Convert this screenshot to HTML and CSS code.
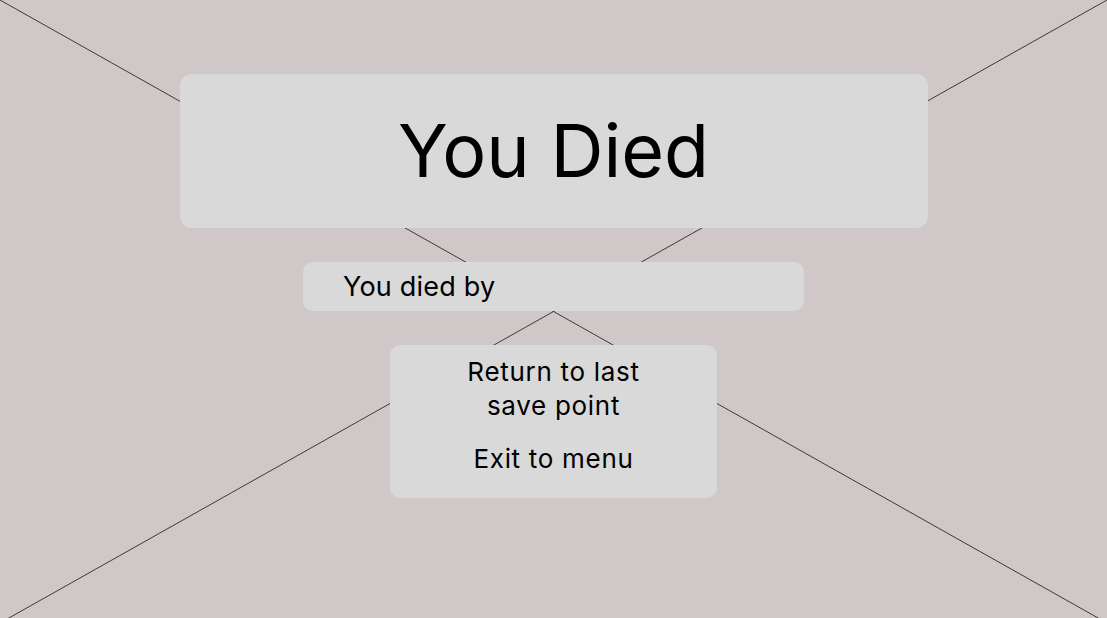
FILE: index.html
```html
<!DOCTYPE html>
<html lang="en">
<head>
<meta charset="utf-8">
<title>You Died</title>
<link rel="stylesheet" href="styles.css">
</head>
<body>
<svg class="backdrop" width="1107" height="623" viewBox="0 0 1107 623" aria-hidden="true">
  <line x1="0" y1="0" x2="1107" y2="623" />
  <line x1="1107" y1="0" x2="0" y2="623" />
</svg>
<main class="screen">
  <section class="panel title-panel">
    <h1 class="title">You Died</h1>
  </section>
  <section class="panel cause-panel">
    <p class="cause">You died by</p>
  </section>
  <nav class="panel menu-panel">
    <div class="menu-item">Return to last<br>save point</div>
    <div class="menu-item">Exit to menu</div>
  </nav>
</main>
</body>
</html>
```
FILE: styles.css
```css
html, body {
  margin: 0;
  padding: 0;
  width: 1107px;
  height: 618px;
  overflow: hidden;
  background: #d0c8c8;
  font-family: Inter, "Noto Sans", "Liberation Sans", sans-serif;
  color: #000;
}

.backdrop {
  position: absolute;
  left: 0;
  top: 0;
  z-index: 0;
}

.backdrop line {
  stroke: #3a3a3a;
  stroke-width: 1;
}

.screen {
  position: relative;
  z-index: 1;
  display: flex;
  flex-direction: column;
  align-items: center;
  gap: 34px;
  padding-top: 74px;
}

.panel {
  background: #d9d9d9;
  box-sizing: border-box;
}

.title-panel {
  width: 748px;
  height: 154px;
  border-radius: 12px;
  display: flex;
  align-items: center;
  justify-content: center;
}

.title {
  margin: 0;
  font-size: 73.5px;
  font-weight: 400;
  line-height: 1;
}

.cause-panel {
  width: 501px;
  height: 49px;
  border-radius: 10px;
  display: flex;
  align-items: center;
  padding-left: 40px;
}

.cause {
  margin: 0;
  font-size: 27px;
  letter-spacing: 0.2px;
  line-height: 1;
}

.menu-panel {
  width: 327px;
  height: 153px;
  border-radius: 10px;
  display: flex;
  flex-direction: column;
  align-items: center;
  gap: 19px;
  padding-top: 10px;
  text-align: center;
}

.menu-item {
  font-size: 26px;
  letter-spacing: 0.7px;
  line-height: 34px;
}
```
